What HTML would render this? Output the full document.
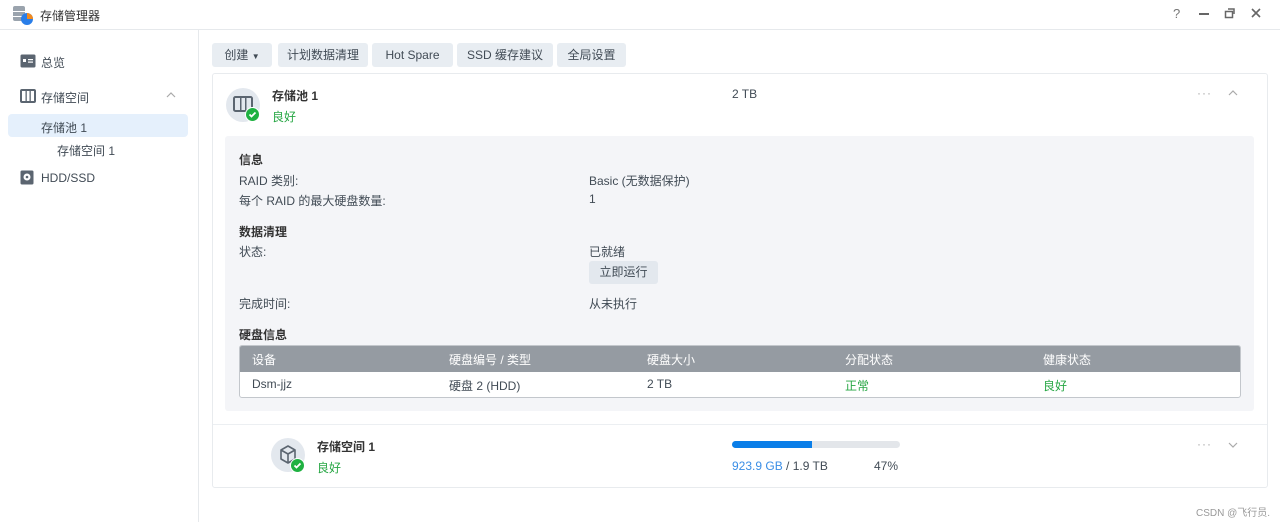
<!DOCTYPE html>
<html><head><meta charset="utf-8"><style>
*{margin:0;padding:0;box-sizing:border-box}
body{width:1280px;height:522px;background:#fff;font-family:"Liberation Sans","Noto Sans CJK SC",sans-serif;font-size:12px;color:#414b55;position:relative;overflow:hidden}
.a{position:absolute;white-space:nowrap}
.btn{position:absolute;top:43px;height:24px;background:#e8edf2;border-radius:3px;line-height:24px;text-align:center;color:#414b55}
.b{font-weight:bold;color:#333}
.g{color:#28a745}
</style></head><body>
<div class="a" style="left:0;top:0;width:1280px;height:30px;border-bottom:1px solid #e6e9ec"></div>
<svg class="a" style="left:12px;top:4px" width="22" height="22"><rect x="1" y="2" width="12" height="15" rx="2" fill="#9aa3ad"/><rect x="1" y="7" width="12" height="1" fill="#fff"/><rect x="1" y="12" width="12" height="1" fill="#fff"/><circle cx="15" cy="15" r="6" fill="#2a7ee8"/><path d="M15 9a6 6 0 0 1 6 6h-6z" fill="#f28a1e"/></svg>
<div class="a" style="left:40px;top:7px;font-size:12px;color:#333">存储管理器</div>
<div class="a" style="left:1173px;top:6px;font-size:13px;color:#777">?</div>
<div class="a" style="left:1199px;top:13px;width:10px;height:2px;background:#666"></div>
<svg class="a" style="left:1224px;top:7px" width="12" height="12"><rect x="1.5" y="4.5" width="7" height="6" fill="none" stroke="#666" stroke-width="1.5"/><path d="M4 2h6v5" fill="none" stroke="#666" stroke-width="1.5"/></svg>
<svg class="a" style="left:1251px;top:8px" width="10" height="10"><path d="M1 1l8 8M9 1l-8 8" stroke="#666" stroke-width="1.6"/></svg>
<div class="a" style="left:198px;top:30px;width:1px;height:492px;background:#e6e9ec"></div>
<svg class="a" style="left:20px;top:54px" width="16" height="14"><rect x="0.5" y="0.5" width="15" height="13" rx="1.5" fill="#5b6570"/><rect x="3" y="5" width="3" height="3" fill="#fff"/><rect x="8" y="5" width="5" height="1.2" fill="#fff"/><rect x="8" y="7.5" width="5" height="1.2" fill="#fff"/></svg>
<div class="a" style="left:41px;top:54px">总览</div>
<svg class="a" style="left:20px;top:89px" width="16" height="14"><rect x="1" y="1" width="14" height="12" rx="1" fill="none" stroke="#5b6570" stroke-width="2"/><rect x="5.5" y="2" width="1.3" height="10" fill="#5b6570"/><rect x="9.5" y="2" width="1.3" height="10" fill="#5b6570"/></svg>
<div class="a" style="left:41px;top:89px">存储空间</div>
<svg class="a" style="left:166px;top:92px" width="10" height="6"><path d="M1 5l4-4 4 4" fill="none" stroke="#aaa" stroke-width="1.2"/></svg>
<div class="a" style="left:8px;top:114px;width:180px;height:23px;background:#e5f0fc;border-radius:4px"></div>
<div class="a" style="left:41px;top:119px">存储池 1</div>
<div class="a" style="left:57px;top:142px">存储空间 1</div>
<svg class="a" style="left:20px;top:170px" width="14" height="15"><rect x="0.5" y="0.5" width="13" height="14" rx="1.5" fill="#5b6570"/><circle cx="7" cy="7" r="3.5" fill="#fff"/><circle cx="7" cy="7" r="1.3" fill="#5b6570"/></svg>
<div class="a" style="left:41px;top:171px">HDD/SSD</div>

<div class="btn" style="left:212px;width:60px">创建 <span style="font-size:8px">▼</span></div>
<div class="btn" style="left:278px;width:90px">计划数据清理</div>
<div class="btn" style="left:372px;width:81px">Hot Spare</div>
<div class="btn" style="left:457px;width:96px">SSD 缓存建议</div>
<div class="btn" style="left:557px;width:69px">全局设置</div>

<div class="a" style="left:212px;top:73px;width:1056px;height:415px;border:1px solid #e8ebee;border-radius:3px"></div>
<div class="a" style="left:226px;top:88px;width:34px;height:34px;border-radius:50%;background:#e3e8ee"></div>
<svg class="a" style="left:233px;top:96px" width="20" height="16"><rect x="1" y="1" width="18" height="14" rx="1.5" fill="none" stroke="#5b6570" stroke-width="2"/><rect x="7" y="2" width="1.5" height="12" fill="#5b6570"/><rect x="12" y="2" width="1.5" height="12" fill="#5b6570"/></svg>
<svg class="a" style="left:245px;top:107px" width="15" height="15"><circle cx="7.5" cy="7.5" r="7" fill="#1fb141" stroke="#fff" stroke-width="1"/><path d="M4.5 7.5l2 2 4-4" fill="none" stroke="#fff" stroke-width="1.8"/></svg>
<div class="a b" style="left:272px;top:87px">存储池 1</div>
<div class="a g" style="left:272px;top:108px">良好</div>
<div class="a" style="left:732px;top:87px">2 TB</div>
<div class="a" style="left:1197px;top:86px;color:#aaa;letter-spacing:1px">···</div>
<svg class="a" style="left:1228px;top:90px" width="10" height="6"><path d="M1 5l4-4 4 4" fill="none" stroke="#aaa" stroke-width="1.2"/></svg>

<div class="a" style="left:225px;top:136px;width:1029px;height:275px;background:#f4f5f8;border-radius:3px"></div>
<div class="a b" style="left:239px;top:151px">信息</div>
<div class="a" style="left:239px;top:172px">RAID 类别:</div>
<div class="a" style="left:589px;top:172px">Basic (无数据保护)</div>
<div class="a" style="left:239px;top:192px">每个 RAID 的最大硬盘数量:</div>
<div class="a" style="left:589px;top:192px">1</div>
<div class="a b" style="left:239px;top:223px">数据清理</div>
<div class="a" style="left:239px;top:243px">状态:</div>
<div class="a" style="left:589px;top:243px">已就绪</div>
<div class="a" style="left:589px;top:261px;width:69px;height:23px;background:#e3e8ee;border-radius:3px;text-align:center;line-height:23px">立即运行</div>
<div class="a" style="left:239px;top:295px">完成时间:</div>
<div class="a" style="left:589px;top:295px">从未执行</div>
<div class="a b" style="left:239px;top:326px">硬盘信息</div>
<div class="a" style="left:239px;top:345px;width:1002px;height:53px;border:1px solid #c3c7cc;border-radius:3px;background:#fff;overflow:hidden">
<div style="height:26px;background:#959ba2"></div></div>
<div class="a" style="left:252px;top:351px;color:#fff">设备</div>
<div class="a" style="left:449px;top:351px;color:#fff">硬盘编号 / 类型</div>
<div class="a" style="left:647px;top:351px;color:#fff">硬盘大小</div>
<div class="a" style="left:845px;top:351px;color:#fff">分配状态</div>
<div class="a" style="left:1043px;top:351px;color:#fff">健康状态</div>
<div class="a" style="left:252px;top:377px">Dsm-jjz</div>
<div class="a" style="left:449px;top:377px">硬盘 2 (HDD)</div>
<div class="a" style="left:647px;top:377px">2 TB</div>
<div class="a g" style="left:845px;top:377px">正常</div>
<div class="a g" style="left:1043px;top:377px">良好</div>

<div class="a" style="left:213px;top:424px;width:1054px;height:1px;background:#eceff2"></div>
<div class="a" style="left:271px;top:438px;width:34px;height:34px;border-radius:50%;background:#e3e8ee"></div>
<svg class="a" style="left:278px;top:444px" width="20" height="22"><path d="M10 2l7 4v9l-7 4-7-4V6z M3 6l7 4 7-4 M10 10v9" fill="none" stroke="#5b6570" stroke-width="1.6" stroke-linejoin="round"/></svg>
<svg class="a" style="left:290px;top:458px" width="15" height="15"><circle cx="7.5" cy="7.5" r="7" fill="#1fb141" stroke="#fff" stroke-width="1"/><path d="M4.5 7.5l2 2 4-4" fill="none" stroke="#fff" stroke-width="1.8"/></svg>
<div class="a b" style="left:317px;top:438px">存储空间 1</div>
<div class="a g" style="left:317px;top:459px">良好</div>
<div class="a" style="left:732px;top:441px;width:168px;height:7px;border-radius:4px;background:#e3e6ea"></div>
<div class="a" style="left:732px;top:441px;width:80px;height:7px;border-radius:4px 0 0 4px;background:#0a7ee8"></div>
<div class="a" style="left:732px;top:459px"><span style="color:#3a8ee6">923.9 GB</span> / 1.9 TB</div>
<div class="a" style="left:874px;top:459px">47%</div>
<div class="a" style="left:1197px;top:437px;color:#aaa;letter-spacing:1px">···</div>
<svg class="a" style="left:1228px;top:442px" width="10" height="6"><path d="M1 1l4 4 4-4" fill="none" stroke="#aaa" stroke-width="1.2"/></svg>
<div class="a" style="left:1196px;top:504px;font-size:10px;color:#999">CSDN @飞行员.</div>
</body></html>
